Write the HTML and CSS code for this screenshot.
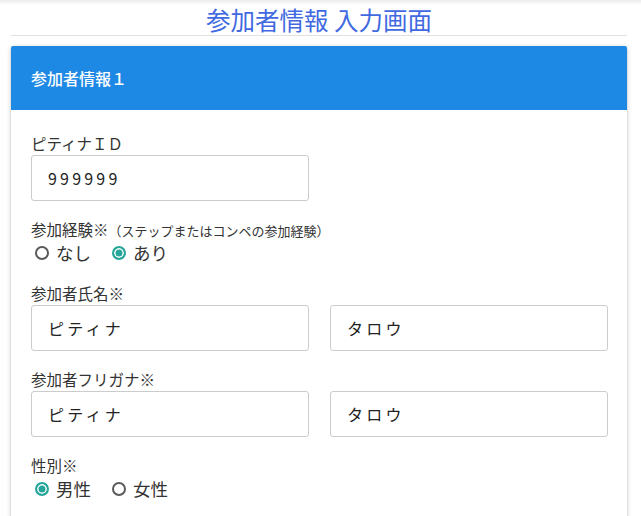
FILE: index.html
```html
<!DOCTYPE html>
<html lang="ja">
<head>
  <meta charset="UTF-8" />
  <meta name="viewport" content="width=device-width, initial-scale=1.0"/>
  <title>参加者情報 入力画面</title>
  <link rel="stylesheet" href="styles.css">
</head>
<body>
  <div class="topbar"></div>
  <div class="wrap">
    <h1 class="page-title">参加者情報 入力画面</h1>

    <div class="card">
      <div class="card-head">参加者情報１</div>
      <div class="card-body">

        <div class="group">
          <label class="label">ピティナＩＤ</label>
          <input class="field" type="text" value="999999">
        </div>

        <div class="group">
          <div class="label">参加経験※<small>（ステップまたはコンペの参加経験）</small></div>
          <div class="radios">
            <label class="radio"><input type="radio" name="exp"><span>なし</span></label>
            <label class="radio"><input type="radio" name="exp" checked><span>あり</span></label>
          </div>
        </div>

        <div class="group">
          <div class="label">参加者氏名※</div>
          <div class="row">
            <input class="field" type="text" value="ピティナ">
            <input class="field" type="text" value="タロウ">
          </div>
        </div>

        <div class="group">
          <div class="label">参加者フリガナ※</div>
          <div class="row">
            <input class="field" type="text" value="ピティナ">
            <input class="field" type="text" value="タロウ">
          </div>
        </div>

        <div class="group">
          <div class="label">性別※</div>
          <div class="radios">
            <label class="radio"><input type="radio" name="sex" checked><span>男性</span></label>
            <label class="radio"><input type="radio" name="sex"><span>女性</span></label>
          </div>
        </div>

      </div>
    </div>
  </div>
</body>
</html>
```

FILE: styles.css
```css
body {
  margin: 0;
  font-family: "Noto Sans CJK JP", "Noto Sans", sans-serif;
  background: #fff;
  color: #333;
}
.topbar { height: 5px; background: linear-gradient(rgba(0,0,0,.07), rgba(0,0,0,0)); }
.wrap { margin: 0 14px 0 11px; }

.page-title {
  margin: 0 0 10px;
  height: 30px;
  line-height: 30px;
  font-size: 24.5px;
  font-weight: 400;
  color: #4169e1;
  text-align: center;
  border-bottom: 1px solid #e0e0e0;
}

.card {
  background: #fff;
  border-radius: 2px;
  box-shadow: 0 2px 2px 0 rgba(0,0,0,.14), 0 3px 1px -2px rgba(0,0,0,.12), 0 1px 5px 0 rgba(0,0,0,.2);
}
.card-head {
  height: 64px;
  display: flex;
  align-items: center;
  padding: 0 20px;
  background: #1e88e5;
  color: #fff;
  font-size: 16px;
  font-weight: 500;
  border-radius: 2px 2px 0 0;
}
.card-body { padding: 21px 19px 20px 20px; }

.group { margin-bottom: 16px; }
.label { display: block; height: 24px; font-size: 15.5px; line-height: 24px; color: #333; overflow: hidden; }
.label small { font-size: 13px; line-height: 1; }

.field {
  box-sizing: border-box;
  width: 278px;
  height: 46px;
  padding: 0 16px;
  border: 1px solid #ccc;
  border-radius: 3px;
  font-family: inherit;
  font-size: 16px;
  letter-spacing: 0.2em;
  color: #222;
  background: #fff;
}
.row { display: grid; grid-template-columns: 1fr 1fr; gap: 21px; }
.row .field { width: 100%; }

.radios { display: flex; gap: 17px; height: 24px; }
.radio { display: inline-flex; align-items: center; gap: 7px; height: 24px; font-size: 17.5px; line-height: 24px; color: #333; }
.radio input {
  appearance: none;
  margin: 0 0 0 4px;
  width: 14px;
  height: 14px;
  border: 2px solid #5a5a5a;
  border-radius: 50%;
  box-sizing: border-box;
  background: #fff;
}
.radio input:checked {
  border-color: #26a69a;
  background: #26a69a;
  box-shadow: inset 0 0 0 1.5px #fff;
}
```
